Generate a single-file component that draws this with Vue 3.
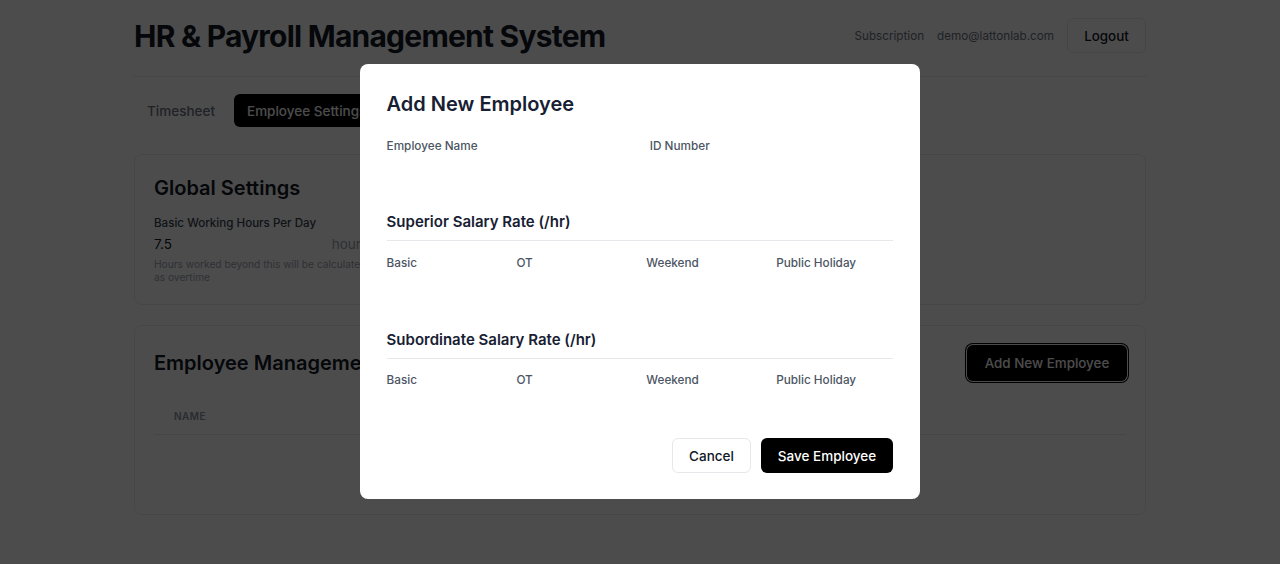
<template>
  <div class="page">
    <header class="top-bar">
      <h1 class="app-title">HR &amp; Payroll Management System</h1>
      <div class="top-actions">
        <a class="top-link">Subscription</a>
        <span class="top-link">demo@lattonlab.com</span>
        <button class="btn-logout">Logout</button>
      </div>
    </header>

    <nav class="tabs">
      <button class="tab">Timesheet</button>
      <button class="tab tab-active">Employee Settings</button>
    </nav>

    <section class="card card-global">
      <h2 class="card-title">Global Settings</h2>
      <div class="hours-field">
        <label class="hours-label">Basic Working Hours Per Day</label>
        <div class="hours-row">
          <span>7.5</span>
          <span class="hours-unit">hours</span>
        </div>
        <p class="hours-hint">Hours worked beyond this will be calculated as overtime</p>
      </div>
    </section>

    <section class="card card-employees">
      <div class="card-head">
        <h2 class="card-title">Employee Management</h2>
        <button class="btn-add">Add New Employee</button>
      </div>
      <div class="table-head">
        <span>NAME</span>
      </div>
    </section>

    <div class="overlay">
      <form class="modal" @submit.prevent>
        <h3 class="modal-title">Add New Employee</h3>

        <div class="grid-two">
          <div v-for="f in topFields" :key="f" class="field">
            <label>{{ f }}</label>
            <input class="ghost-input" type="text" />
          </div>
        </div>

        <div v-for="group in rateGroups" :key="group" class="rate-group">
          <h4 class="rate-title">{{ group }}</h4>
          <div class="grid-four">
            <div v-for="r in rates" :key="r" class="field">
              <label>{{ r }}</label>
              <input class="ghost-input ghost-input-sm" type="text" />
            </div>
          </div>
        </div>

        <div class="modal-actions">
          <button type="button" class="btn-cancel">Cancel</button>
          <button type="submit" class="btn-save">Save Employee</button>
        </div>
      </form>
    </div>
  </div>
</template>

<script setup>
const topFields = ['Employee Name', 'ID Number']
const rateGroups = ['Superior Salary Rate (/hr)', 'Subordinate Salary Rate (/hr)']
const rates = ['Basic', 'OT', 'Weekend', 'Public Holiday']
</script>

<style>
html,
body {
  background: #fff;
}
</style>

<style scoped>
.page {
  width: 1012px;
  margin: 0 auto;
  height: 564px;
  overflow: hidden;
  font-family: Inter, 'Liberation Sans', sans-serif;
  color: #111827;
}

.top-bar {
  display: flex;
  align-items: center;
  justify-content: space-between;
  height: 77px;
  padding-bottom: 5px;
  box-sizing: border-box;
  border-bottom: 1px solid #eaecef;
}
.app-title {
  margin: 0;
  font-size: 30px;
  line-height: 36px;
  font-weight: 700;
  letter-spacing: -0.77px;
}
.top-actions {
  display: flex;
  align-items: center;
  gap: 13px;
}
.top-link {
  font-size: 11.7px;
  color: #6b7280;
}
.btn-logout {
  width: 79px;
  height: 35px;
  background: #fff;
  border: 1px solid #e5e7eb;
  border-radius: 6px;
  font: 500 13.4px Inter, sans-serif;
  color: #111827;
}

.tabs {
  display: flex;
  gap: 6px;
  padding: 17px 0 27px;
}
.tab {
  height: 33px;
  padding: 0 13px;
  border: 0;
  border-radius: 6px;
  background: transparent;
  font: 500 13.5px Inter, sans-serif;
  color: #6b7280;
}
.tab-active {
  background: #000;
  color: #fff;
}

.card {
  border: 1px solid #eaecef;
  border-radius: 8px;
  padding: 19px 19px;
  box-sizing: border-box;
}
.card-global {
  height: 151px;
  margin-bottom: 20px;
}
.card-employees {
  height: 190px;
}
.card-title {
  margin: 0;
  font-size: 20px;
  line-height: 28px;
  font-weight: 600;
}
.hours-field {
  width: 222px;
  margin-top: 13px;
}
.hours-label {
  display: block;
  font-size: 11.6px;
  line-height: 16px;
  font-weight: 500;
  color: #374151;
}
.hours-row {
  display: flex;
  justify-content: space-between;
  margin-top: 3px;
  font-size: 13.5px;
  line-height: 20px;
  white-space: nowrap;
}
.hours-unit {
  color: #9ca3af;
  margin-right: 8px;
}
.hours-hint {
  margin: 4px 0 0;
  font-size: 10.2px;
  line-height: 13px;
  color: #9ca3af;
}

.card-head {
  display: flex;
  align-items: center;
  justify-content: space-between;
}
.btn-add {
  width: 160px;
  height: 36px;
  margin-right: -1px;
  background: #000;
  border: 0;
  border-radius: 6px;
  box-shadow:
    0 0 0 1px #fff,
    0 0 0 2px #000;
  font: 500 13.4px Inter, sans-serif;
  color: #fff;
}
.table-head {
  margin-top: 28px;
  padding: 0 20px 11px;
  border-bottom: 1px solid #eaecef;
  font-size: 10px;
  line-height: 14px;
  font-weight: 600;
  letter-spacing: 0.5px;
  color: #8b93a0;
}

.overlay {
  position: fixed;
  inset: 0;
  padding-bottom: 1px;
  display: flex;
  align-items: center;
  justify-content: center;
  background: rgba(0, 0, 0, 0.7);
}
.modal {
  width: 560px;
  height: 435px;
  box-sizing: border-box;
  padding: 26px 27px 26px 26.6px;
  background: #fff;
  border-radius: 8px;
  display: flex;
  flex-direction: column;
}
.modal-title {
  margin: 0;
  font-size: 20px;
  line-height: 28px;
  font-weight: 600;
  color: #172033;
}
.grid-two {
  display: grid;
  grid-template-columns: 1fr 1fr;
  gap: 20px;
  margin-top: 20px;
}
.grid-four {
  display: grid;
  grid-template-columns: repeat(4, 1fr);
  gap: 13px;
}
.field label {
  display: block;
  font-size: 11.75px;
  line-height: 16px;
  font-weight: 500;
  color: #4b5563;
}
.ghost-input {
  display: block;
  width: 100%;
  height: 35px;
  padding: 0;
  border: 0;
  outline: 0;
  background: transparent;
}
.ghost-input-sm {
  height: 37px;
}
.rate-group {
  margin-top: 22px;
}
.rate-group + .rate-group {
  margin-top: 21px;
}
.rate-title {
  margin: 0 0 13.5px;
  padding-bottom: 7px;
  border-bottom: 1px solid #e5e7eb;
  font-size: 15px;
  line-height: 22px;
  font-weight: 600;
  color: #172033;
}
.modal-actions {
  margin-top: auto;
  display: flex;
  justify-content: flex-end;
  gap: 10px;
}
.btn-cancel,
.btn-save {
  height: 35px;
  border-radius: 6px;
  font: 500 13.5px Inter, sans-serif;
}
.btn-cancel {
  width: 79px;
  background: #fff;
  border: 1px solid #e5e7eb;
  color: #111827;
}
.btn-save {
  width: 132px;
  background: #000;
  border: 0;
  color: #fff;
}
</style>
